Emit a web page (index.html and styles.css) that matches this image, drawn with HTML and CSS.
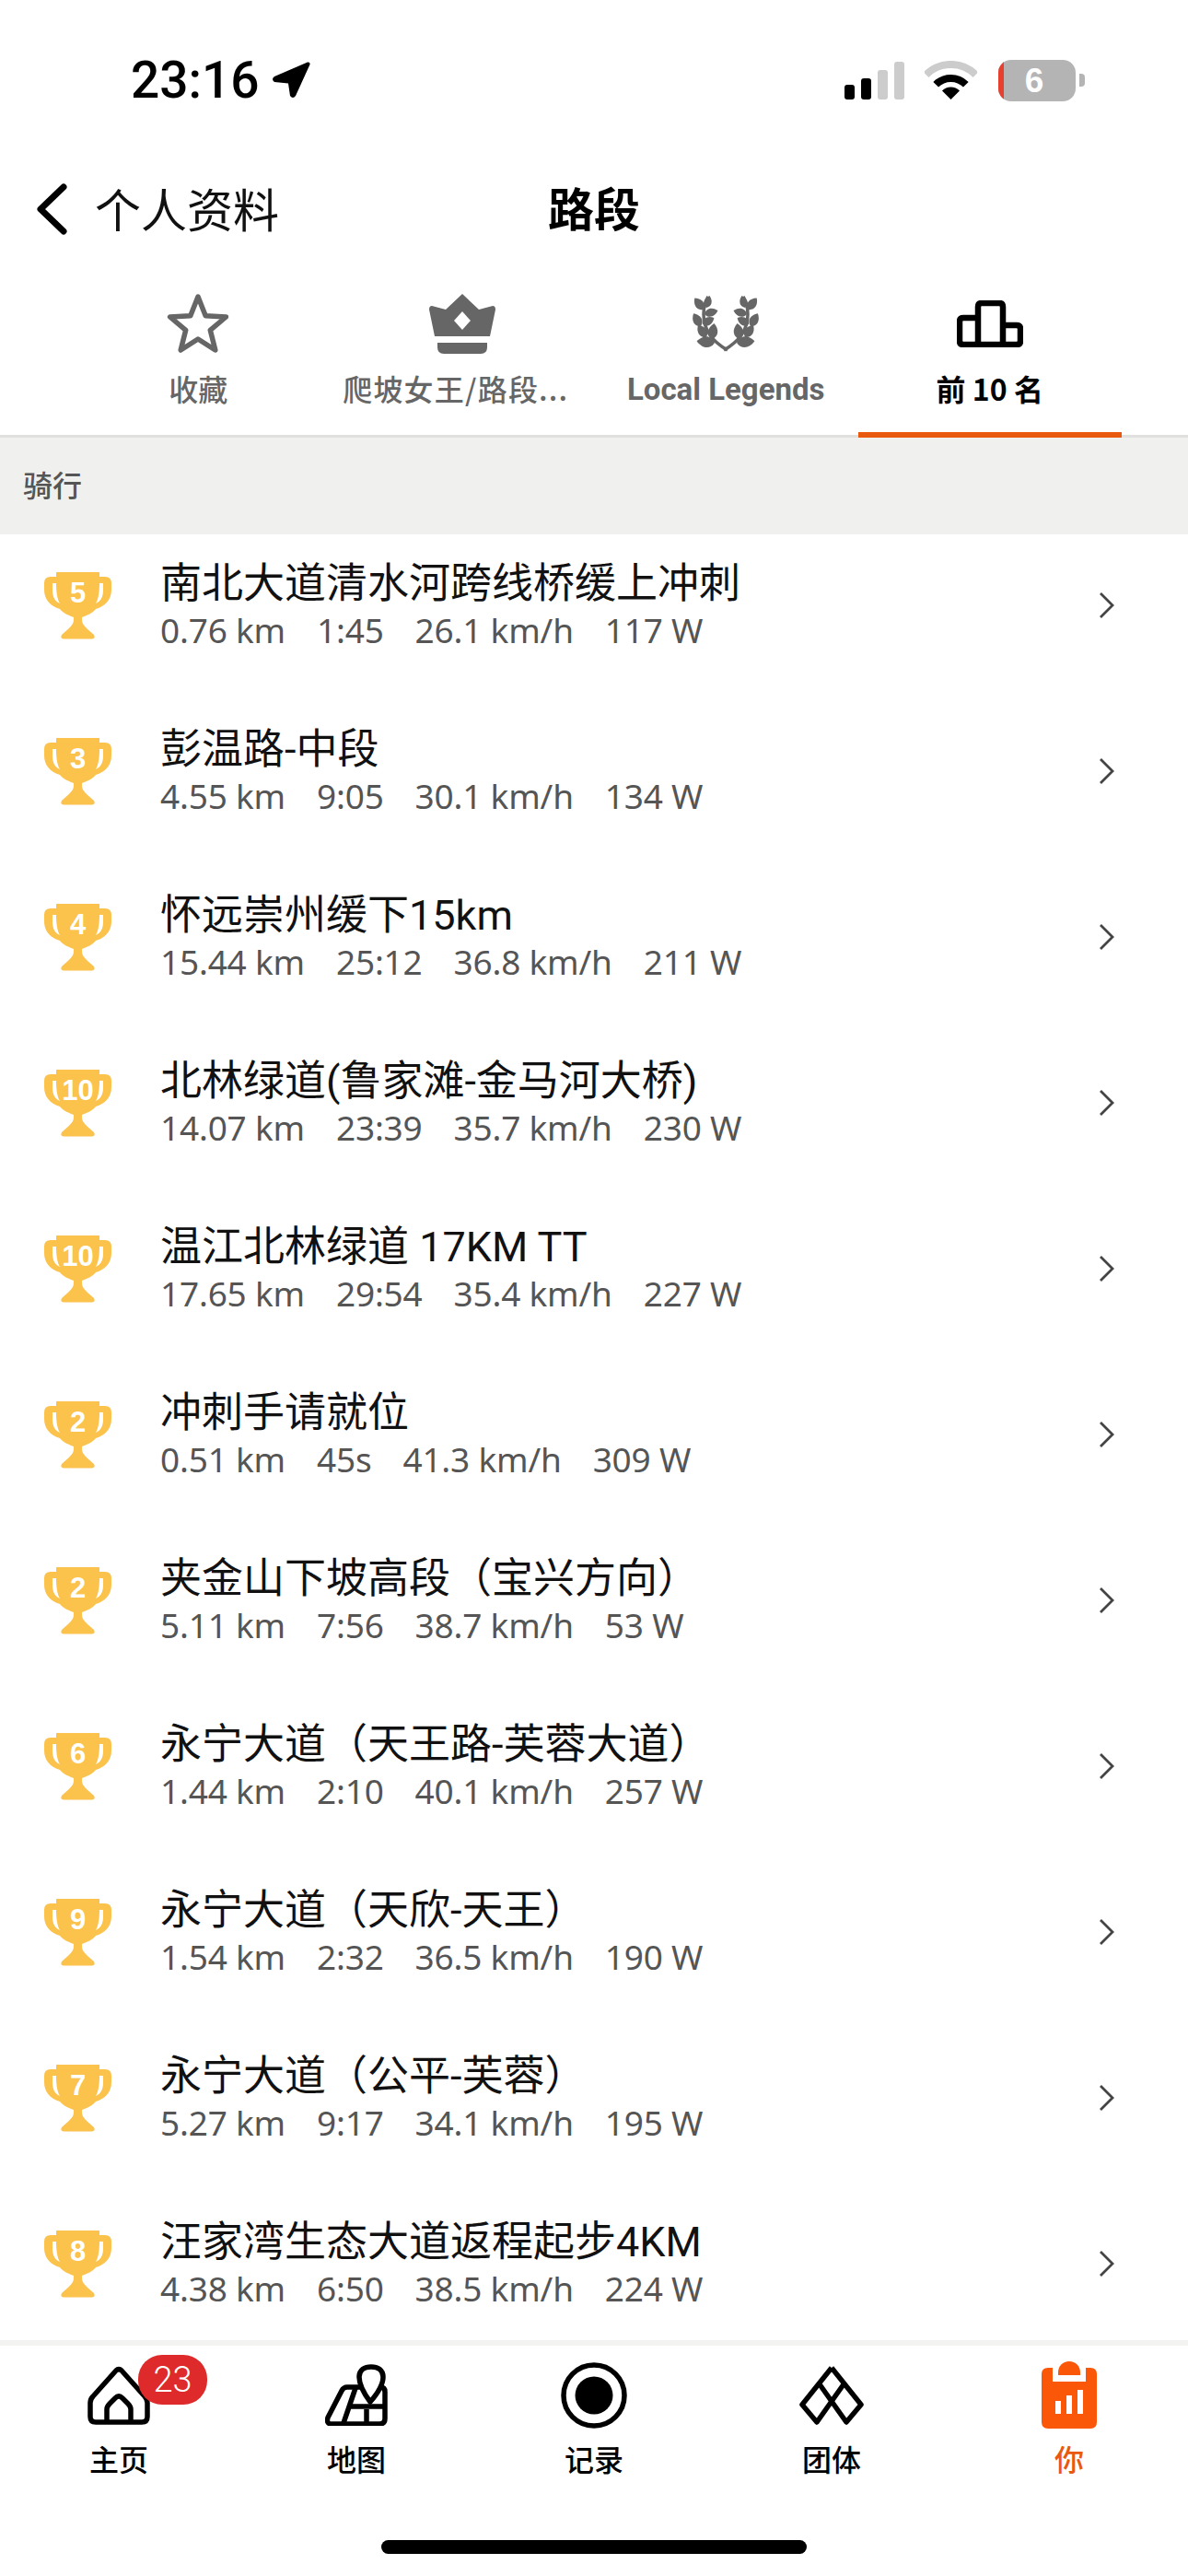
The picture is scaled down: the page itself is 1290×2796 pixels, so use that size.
FILE: index.html
```html
<!DOCTYPE html>
<html lang="zh-CN">
<head>
<meta charset="utf-8">
<title>路段</title>
<link rel="stylesheet" href="styles.css">
</head>
<body>
<svg class="defs" width="0" height="0" aria-hidden="true">
  <defs>
    <path id="leaf" d="M0 0C6-3 6-10 0-15C-6-10-6-3 0 0Z"/>
    <g id="wreath-half">
      <path d="M38 61C22 52 12 40 12 22C12 14 14 8 17 3" fill="none" stroke="#666" stroke-width="3.5"/>
      <use href="#leaf" transform="translate(15 15) rotate(15) scale(.9)"/>
      <use href="#leaf" transform="translate(12 17) rotate(-38) scale(1.05)"/>
      <use href="#leaf" transform="translate(13 22) rotate(75) scale(1)"/>
      <use href="#leaf" transform="translate(9 35) rotate(-30) scale(1.05)"/>
      <use href="#leaf" transform="translate(11 33) rotate(60) scale(.95)"/>
      <use href="#leaf" transform="translate(15 47) rotate(-35) scale(1.05)"/>
      <use href="#leaf" transform="translate(21 49) rotate(8) scale(1.15)"/>
      <use href="#leaf" transform="translate(24 53) rotate(-85) scale(1.3)"/>
    </g>
    <g id="trophy">
      <path d="M13 1H60V6H66Q73 6 73 13V20C73 31 66 38 56 41C52 46 46 48 41 50V53C41 58 46 62 54 69Q56 73 52 73.500H21Q17 73 19 69C27 62 32 58 32 53V50C27 48 21 46 17 41C7 38 0 31 0 20V13Q0 6 7 6H13Z" fill="#fbc24c"/>
      <path d="M9 13H13C13 22 14 30 17 35C12 33 9 28 9 21Z M64 13H60C60 22 59 30 56 35C61 33 64 28 64 21Z" fill="#fff"/>
    </g>
  </defs>
</svg>
<div class="phone">
  <header class="status">
    <div class="status-left">
      <span class="time">23:16</span>
      <svg class="loc" width="42" height="40" viewBox="0 0 42 40"><path d="M39 0.500L3 16Q-1 19 3 22L18 23.500L20 37Q23 41 26 37L41.500 3Q42 0 39 0.500Z" fill="#000"/></svg>
    </div>
    <div class="status-right">
      <div class="signal">
        <i class="bar b1"></i><i class="bar b2"></i><i class="bar b3"></i><i class="bar b4"></i>
      </div>
      <svg class="wifi" width="57" height="42" viewBox="0 0 57 42">
        <path d="M1.600 15.100A38 38 0 0 1 55.400 15.100" fill="none" stroke="#ccc" stroke-width="8"/>
        <path d="M12.200 25.700A23 23 0 0 1 44.800 25.700" fill="none" stroke="#000" stroke-width="8"/>
        <path d="M28.500 42L19 32.500A13.400 13.400 0 0 1 38 32.500Z" fill="#000"/>
      </svg>
      <div class="battery"><span class="battery-red"></span><span class="battery-num">6</span></div>
      <span class="battery-nub"></span>
    </div>
  </header>

  <nav class="navbar">
    <div class="back">
      <svg width="33" height="56" viewBox="0 0 33 56"><path d="M29 4L4 28L29 52" fill="none" stroke="#000" stroke-width="7" stroke-linecap="round" stroke-linejoin="round"/></svg>
      <span class="back-label">个人资料</span>
    </div>
    <h1 class="nav-title">路段</h1>
  </nav>

  <div class="tabs">
    <div class="tab">
      <div class="tab-icon">
        <svg width="68" height="66" viewBox="0 0 68 66"><path d="M34 4L42.200 24.700L64.400 26L47.300 40.300L52.800 62L34 50L15.200 62L20.700 40.300L3.600 26L25.800 24.700Z" fill="none" stroke="#666" stroke-width="5.500" stroke-linejoin="round"/></svg>
      </div>
      <span class="tab-label">收藏</span>
    </div>
    <div class="tab">
      <div class="tab-icon">
        <svg width="72" height="65" viewBox="0 0 72 65">
          <path d="M36 0L54 17L69 13Q72 13 72 17L66 46H6L0 17Q0 13 3 13L18 17Z" fill="#666"/>
          <path d="M36 19L45 29L36 39L27 29Z" fill="#fff"/>
          <path d="M9 53H63V58Q63 65 56 65H16Q9 65 9 58Z" fill="#666"/>
        </svg>
      </div>
      <span class="tab-label tab-label-wide">爬坡女王/路段...</span>
    </div>
    <div class="tab">
      <div class="tab-icon">
        <svg width="72" height="64" viewBox="0 0 72 64" fill="#666">
          <use href="#wreath-half"/>
          <use href="#wreath-half" transform="translate(72 0) scale(-1 1)"/>
        </svg>
      </div>
      <span class="tab-label tab-label-latin">Local Legends</span>
    </div>
    <div class="tab tab-active">
      <div class="tab-icon">
        <svg width="72" height="51" viewBox="0 0 72 51"><path d="M23 48V7Q23 3 27 3H46Q50 3 50 7V48M23 19H7Q3 19 3 23V44Q3 48 7 48H65Q69 48 69 44V31Q69 27 65 27H50" fill="none" stroke="#000" stroke-width="6.500" stroke-linejoin="round"/></svg>
      </div>
      <span class="tab-label">前 10 名</span>
    </div>
  </div>

  <div class="section">骑行</div>

  <main class="list">
    <div class="row">
      <div class="trophy"><svg width="73" height="75" viewBox="0 0 73 75"><use href="#trophy"/></svg><span class="rank">5</span></div>
      <div class="info"><div class="name">南北大道清水河跨线桥缓上冲刺</div><div class="stats"><span>0.76 km</span><span>1:45</span><span>26.1 km/h</span><span>117 W</span></div></div>
      <svg class="chev" width="17" height="30" viewBox="0 0 17 30"><path d="M2 2L15 15L2 28" fill="none" stroke="#444" stroke-width="2.800"/></svg>
    </div>
    <div class="row">
      <div class="trophy"><svg width="73" height="75" viewBox="0 0 73 75"><use href="#trophy"/></svg><span class="rank">3</span></div>
      <div class="info"><div class="name">彭温路-中段</div><div class="stats"><span>4.55 km</span><span>9:05</span><span>30.1 km/h</span><span>134 W</span></div></div>
      <svg class="chev" width="17" height="30" viewBox="0 0 17 30"><path d="M2 2L15 15L2 28" fill="none" stroke="#444" stroke-width="2.800"/></svg>
    </div>
    <div class="row">
      <div class="trophy"><svg width="73" height="75" viewBox="0 0 73 75"><use href="#trophy"/></svg><span class="rank">4</span></div>
      <div class="info"><div class="name">怀远崇州缓下15km</div><div class="stats"><span>15.44 km</span><span>25:12</span><span>36.8 km/h</span><span>211 W</span></div></div>
      <svg class="chev" width="17" height="30" viewBox="0 0 17 30"><path d="M2 2L15 15L2 28" fill="none" stroke="#444" stroke-width="2.800"/></svg>
    </div>
    <div class="row">
      <div class="trophy"><svg width="73" height="75" viewBox="0 0 73 75"><use href="#trophy"/></svg><span class="rank">10</span></div>
      <div class="info"><div class="name">北林绿道(鲁家滩-金马河大桥)</div><div class="stats"><span>14.07 km</span><span>23:39</span><span>35.7 km/h</span><span>230 W</span></div></div>
      <svg class="chev" width="17" height="30" viewBox="0 0 17 30"><path d="M2 2L15 15L2 28" fill="none" stroke="#444" stroke-width="2.800"/></svg>
    </div>
    <div class="row">
      <div class="trophy"><svg width="73" height="75" viewBox="0 0 73 75"><use href="#trophy"/></svg><span class="rank">10</span></div>
      <div class="info"><div class="name">温江北林绿道 17KM TT</div><div class="stats"><span>17.65 km</span><span>29:54</span><span>35.4 km/h</span><span>227 W</span></div></div>
      <svg class="chev" width="17" height="30" viewBox="0 0 17 30"><path d="M2 2L15 15L2 28" fill="none" stroke="#444" stroke-width="2.800"/></svg>
    </div>
    <div class="row">
      <div class="trophy"><svg width="73" height="75" viewBox="0 0 73 75"><use href="#trophy"/></svg><span class="rank">2</span></div>
      <div class="info"><div class="name">冲刺手请就位</div><div class="stats"><span>0.51 km</span><span>45s</span><span>41.3 km/h</span><span>309 W</span></div></div>
      <svg class="chev" width="17" height="30" viewBox="0 0 17 30"><path d="M2 2L15 15L2 28" fill="none" stroke="#444" stroke-width="2.800"/></svg>
    </div>
    <div class="row">
      <div class="trophy"><svg width="73" height="75" viewBox="0 0 73 75"><use href="#trophy"/></svg><span class="rank">2</span></div>
      <div class="info"><div class="name">夹金山下坡高段（宝兴方向）</div><div class="stats"><span>5.11 km</span><span>7:56</span><span>38.7 km/h</span><span>53 W</span></div></div>
      <svg class="chev" width="17" height="30" viewBox="0 0 17 30"><path d="M2 2L15 15L2 28" fill="none" stroke="#444" stroke-width="2.800"/></svg>
    </div>
    <div class="row">
      <div class="trophy"><svg width="73" height="75" viewBox="0 0 73 75"><use href="#trophy"/></svg><span class="rank">6</span></div>
      <div class="info"><div class="name">永宁大道（天王路-芙蓉大道）</div><div class="stats"><span>1.44 km</span><span>2:10</span><span>40.1 km/h</span><span>257 W</span></div></div>
      <svg class="chev" width="17" height="30" viewBox="0 0 17 30"><path d="M2 2L15 15L2 28" fill="none" stroke="#444" stroke-width="2.800"/></svg>
    </div>
    <div class="row">
      <div class="trophy"><svg width="73" height="75" viewBox="0 0 73 75"><use href="#trophy"/></svg><span class="rank">9</span></div>
      <div class="info"><div class="name">永宁大道（天欣-天王）</div><div class="stats"><span>1.54 km</span><span>2:32</span><span>36.5 km/h</span><span>190 W</span></div></div>
      <svg class="chev" width="17" height="30" viewBox="0 0 17 30"><path d="M2 2L15 15L2 28" fill="none" stroke="#444" stroke-width="2.800"/></svg>
    </div>
    <div class="row">
      <div class="trophy"><svg width="73" height="75" viewBox="0 0 73 75"><use href="#trophy"/></svg><span class="rank">7</span></div>
      <div class="info"><div class="name">永宁大道（公平-芙蓉）</div><div class="stats"><span>5.27 km</span><span>9:17</span><span>34.1 km/h</span><span>195 W</span></div></div>
      <svg class="chev" width="17" height="30" viewBox="0 0 17 30"><path d="M2 2L15 15L2 28" fill="none" stroke="#444" stroke-width="2.800"/></svg>
    </div>
    <div class="row">
      <div class="trophy"><svg width="73" height="75" viewBox="0 0 73 75"><use href="#trophy"/></svg><span class="rank">8</span></div>
      <div class="info"><div class="name">汪家湾生态大道返程起步4KM</div><div class="stats"><span>4.38 km</span><span>6:50</span><span>38.5 km/h</span><span>224 W</span></div></div>
      <svg class="chev" width="17" height="30" viewBox="0 0 17 30"><path d="M2 2L15 15L2 28" fill="none" stroke="#444" stroke-width="2.800"/></svg>
    </div>
  </main>

  <footer class="tabbar">
    <div class="tabbar-row">
      <div class="tb-item">
        <div class="tb-icon">
          <svg width="68" height="64" viewBox="0 0 68 64" fill="none" stroke="#000" stroke-width="5.500" stroke-linejoin="round"><path d="M31 5Q34 2 37 5L62 33Q65 36 65 40V55Q65 61 59 61H9Q3 61 3 55V40Q3 36 6 33Z"/><path d="M21 61V47Q21 44 24 41L30 35Q34 31 38 35L44 41Q47 44 47 47V61"/></svg>
        </div>
        <span class="tb-label">主页</span>
        <span class="badge">23</span>
      </div>
      <div class="tb-item">
        <div class="tb-icon">
          <svg width="68" height="67" viewBox="0 0 68 67" fill="none" stroke="#000" stroke-width="5.500" stroke-linejoin="round"><path d="M24 25Q20 25 18 29L3 58Q1 65 7 65H59Q65 65 65 59V30Q65 25 60 25Z"/><path d="M33 26L20 64M45 49V64M28 46H64"/><path d="M49 41C43 33 37 24 37 14C37 6 43 3 50 3C57 3 63 6 63 14C63 24 56 33 49 41Z" fill="#fff"/></svg>
        </div>
        <span class="tb-label">地图</span>
      </div>
      <div class="tb-item">
        <div class="tb-icon">
          <svg width="72" height="72" viewBox="0 0 72 72"><circle cx="36" cy="36" r="33" fill="none" stroke="#000" stroke-width="5.500"/><circle cx="36" cy="36" r="20.500" fill="#000"/></svg>
        </div>
        <span class="tb-label">记录</span>
      </div>
      <div class="tb-item">
        <div class="tb-icon">
          <svg width="70" height="65" viewBox="0 0 70 65" fill="none" stroke="#000" stroke-width="5.500" stroke-linejoin="round"><path d="M35 3L67 43L51 62L22 21"/><path d="M35 3L3 43L19 62L48 21"/></svg>
        </div>
        <span class="tb-label">团体</span>
      </div>
      <div class="tb-item tb-active">
        <div class="tb-icon">
          <svg width="60" height="73" viewBox="0 0 60 73">
            <path d="M7 7H53Q60 7 60 14V66Q60 73 53 73H7Q0 73 0 66V14Q0 7 7 7Z" fill="#fa5808"/>
            <path d="M12 5H48V22H12Z" fill="#fff"/>
            <path d="M18 15V12C18 5 23 0 30 0C37 0 42 5 42 12V15Z" fill="#fa5808"/>
            <path d="M15 43H21V57H15ZM27 37H33V57H27ZM39 31H45V57H39Z" fill="#fff"/>
          </svg>
        </div>
        <span class="tb-label">你</span>
      </div>
    </div>
    <div class="home-bar"></div>
  </footer>
</div>
</body>
</html>
```

FILE: styles.css
```css
* { box-sizing: border-box; margin: 0; padding: 0; }
html, body { background: #fff; }
body {
  width: 1290px;
  height: 2796px;
  overflow: hidden;
  font-family: "Noto Sans", "Noto Sans CJK SC", sans-serif;
  color: #000;
}
.defs { display: block; height: 0; }
.phone { width: 1290px; height: 2796px; display: flex; flex-direction: column; }

.status { height: 170px; flex: none; display: flex; justify-content: space-between; padding: 60px 112px 0 142px; }
.status-left { display: flex; align-items: center; gap: 13px; height: 54px; }
.time { font-family: Roboto, "Liberation Sans", sans-serif; font-size: 55px; font-weight: 500; line-height: 54px; }
.status-right { display: flex; align-items: center; height: 54px; }
.signal { display: flex; align-items: flex-end; gap: 7px; height: 41px; margin-right: 22px; }
.bar { display: block; width: 11px; border-radius: 3px; background: #000; }
.b1 { height: 16px; }
.b2 { height: 23px; }
.b3 { height: 32px; background: #ccc; }
.b4 { height: 41px; background: #ccc; }
.wifi { margin-right: 23px; }
.battery { position: relative; width: 84px; height: 45px; border-radius: 14px; background: #b4b4b4; overflow: hidden; display: flex; align-items: center; justify-content: center; }
.battery-red { position: absolute; left: 0; top: 0; bottom: 0; width: 6px; background: #e8402f; }
.battery-num { font-family: "Liberation Sans", sans-serif; font-weight: 700; font-size: 37px; line-height: 45px; color: #fff; margin-left: -6px; }
.battery-nub { width: 6px; height: 14px; margin-left: 4px; background: #b4b4b4; border-radius: 0 4px 4px 0; }

.navbar { position: relative; height: 114px; flex: none; display: flex; align-items: center; justify-content: center; }
.back { position: absolute; left: 40px; top: 0; height: 114px; display: flex; align-items: center; gap: 30px; }
.back-label { font-size: 50px; line-height: 60px; margin-bottom: 4px; font-family: "Noto Sans CJK SC", sans-serif; font-weight: 400; color: #111; }
.nav-title { font-size: 50px; line-height: 60px; margin-bottom: 6px; font-weight: 700; font-family: "Noto Sans CJK SC", sans-serif; }

.tabs { flex: none; display: flex; padding: 0 72px; height: 191px; box-shadow: inset 0 -3px 0 #e0e0de; }
.tab { flex: 1 1 0; min-width: 0; display: flex; flex-direction: column; align-items: center; padding-top: 27px; height: 191px; border-bottom: 6px solid transparent; color: #666; }
.tab-active { border-bottom-color: #e8590f; color: #000; }
.tab-icon { height: 80px; display: flex; align-items: center; justify-content: center; }
.tab-label { display: block; margin-top: 10px; font-size: 32px; line-height: 40px; font-weight: 500; white-space: nowrap; font-family: "Noto Sans CJK SC", sans-serif; }
.tab-label-wide { letter-spacing: 1.2px; margin-left: -14px; }
.tab-label-latin { margin-top: 12px; font-family: Roboto, "Liberation Sans", sans-serif; font-weight: 700; font-size: 33px; }
.tab-active .tab-label { font-weight: 700; }

.section { flex: none; height: 105px; padding: 30px 25px 0; background: #f0f0ee; color: #555; font-size: 32px; line-height: 40px; font-weight: 500; font-family: "Noto Sans CJK SC", sans-serif; }

.list { flex: 1 1 0; min-height: 0; overflow: hidden; }
.row { height: 180px; padding: 0 80px 26px 48px; display: flex; align-items: center; }
.trophy { position: relative; width: 73px; height: 75px; flex: none; }
.trophy svg { display: block; }
.rank { position: absolute; left: 0; right: 0; top: 6px; text-align: center; font-family: "Liberation Sans", sans-serif; font-weight: 700; font-size: 31px; line-height: 36px; color: #fff; }
.info { flex: 1 1 0; min-width: 0; margin: 0 0 0 53px; }
.name { font-size: 45px; line-height: 54px; font-family: Roboto, "Noto Sans CJK SC", sans-serif; color: #111; white-space: nowrap; font-weight: 400; }
.stats { display: flex; gap: 34px; margin-top: 0; font-size: 37px; line-height: 46px; color: #555; white-space: nowrap; letter-spacing: -0.2px; }
.chev { flex: none; }

.tabbar { flex: none; height: 256px; border-top: 6px solid #f3f3f2; display: flex; flex-direction: column; background: #fff; }
.tabbar-row { display: flex; height: 144px; }
.tb-item { position: relative; width: 258px; padding-top: 17px; display: flex; flex-direction: column; align-items: center; }
.tb-icon { height: 73px; display: flex; align-items: center; justify-content: center; }
.tb-label { margin-top: 12px; font-size: 32px; line-height: 40px; font-weight: 500; font-family: "Noto Sans CJK SC", sans-serif; color: #000; }
.tb-active .tb-label { color: #e8590f; }
.badge { position: absolute; left: 150px; top: 10px; width: 75px; height: 54px; border-radius: 26px; background: #de2a2a; color: #fff; font-family: Roboto, sans-serif; font-weight: 300; font-size: 38px; line-height: 54px; text-align: center; }
.home-bar { width: 462px; height: 15px; border-radius: 8px; background: #000; margin: 67px auto 0; }
```
